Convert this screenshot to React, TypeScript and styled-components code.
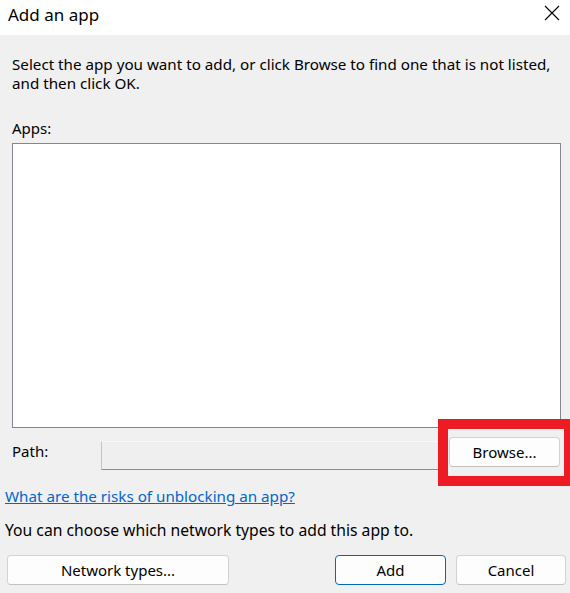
import React from "react";
import styled, { createGlobalStyle } from "styled-components";

const GlobalStyle = createGlobalStyle`
  html, body {
    margin: 0;
    padding: 0;
    background: #f0f0f0;
  }
  body {
    font-family: "Noto Sans", "Liberation Sans", sans-serif;
    color: #000;
  }
`;

const Dialog = styled.div`
  width: 570px;
  height: 593px;
  display: flex;
  flex-direction: column;
  background: #f0f0f0;
  overflow: hidden;
`;

const TitleBar = styled.div`
  height: 35px;
  flex: none;
  background: #fff;
  display: flex;
  align-items: center;
  justify-content: space-between;
  padding: 0 10px 0 8px;
`;

const Title = styled.div`
  font-size: 17px;
  line-height: 24px;
  margin-top: -6px;
`;

const CloseButton = styled.button`
  border: 0;
  background: transparent;
  padding: 0;
  width: 16px;
  height: 16px;
  margin-top: -10px;
  display: flex;
  align-items: center;
  justify-content: center;
  cursor: pointer;
`;

const Content = styled.div`
  flex: 1;
  display: flex;
  flex-direction: column;
`;

const Section = styled.div`
  padding: 0 9px 0 12px;
  display: flex;
  flex-direction: column;
`;

const Prompt = styled.p`
  margin: 20px 0 0;
  font-size: 15.2px;
  line-height: 19px;
  white-space: nowrap;
`;

const FieldLabel = styled.div`
  font-size: 15px;
  line-height: 19px;
  margin-top: 26px;
`;

const AppList = styled.div`
  margin-top: 5px;
  height: 283px;
  background: #fff;
  border: 1px solid #828790;
`;

const PathRow = styled.div`
  display: flex;
  align-items: center;
  margin-top: 11px;
  height: 31px;
`;

const PathLabel = styled.div`
  width: 89px;
  flex: none;
  font-size: 15px;
  line-height: 19px;
  margin-top: -6px;
`;

const PathInput = styled.div`
  width: 338px;
  height: 27px;
  flex: none;
  align-self: flex-end;
  background: #efefef;
  border: 1px solid #d6d6d6;
  border-top-color: #f8f8f8;
  border-bottom-color: #8c8c8c;
  border-left-color: #c4c4c4;
`;

const Marked = styled.div`
  position: relative;
  margin-left: 8px;
  align-self: flex-start;
  margin-top: -2px;

  &::after {
    content: "";
    position: absolute;
    top: -18px;
    left: -11px;
    right: -14px;
    bottom: -19px;
    border: 10px solid #ed1c24;
    pointer-events: none;
  }
`;

const Button = styled.button<{ $primary?: boolean; $width: number }>`
  width: ${(p) => p.$width}px;
  height: 30px;
  box-sizing: border-box;
  padding: 0;
  font-family: inherit;
  font-size: 15px;
  color: #000;
  background: #fdfdfd;
  border: 1px solid ${(p) => (p.$primary ? "#0067c0" : "#d3d3d3")};
  border-bottom-color: ${(p) => (p.$primary ? "#0067c0" : "#c2c2c2")};
  border-radius: 4px;
  cursor: pointer;
`;

const Footer = styled.div`
  padding: 0 4px 0 5px;
  display: flex;
  flex-direction: column;
`;

const HelpLink = styled.a`
  margin-top: 17px;
  font-size: 15.2px;
  line-height: 19px;
  color: #0066cc;
  text-decoration: underline;
  align-self: flex-start;
  cursor: pointer;
`;

const Note = styled.div`
  margin-top: 15px;
  font-size: 15.7px;
  line-height: 19px;
`;

const ButtonBar = styled.div`
  margin-top: 15px;
  display: flex;
  align-items: center;
  padding-left: 2px;
`;

const Spacer = styled.div`
  flex: 1;
`;

const ButtonGap = styled.div`
  width: 10px;
`;

const CloseIcon = () => (
  <svg width="16" height="16" viewBox="0 0 16 16">
    <path d="M1 1 L15 15 M15 1 L1 15" stroke="#000" strokeWidth="1.1" fill="none" />
  </svg>
);

export default function App() {
  return (
    <>
      <GlobalStyle />
      <Dialog>
        <TitleBar>
          <Title>Add an app</Title>
          <CloseButton aria-label="Close">
            <CloseIcon />
          </CloseButton>
        </TitleBar>
        <Content>
          <Section>
            <Prompt>
              Select the app you want to add, or click Browse to find one that is not listed,
              <br />
              and then click OK.
            </Prompt>
            <FieldLabel>Apps:</FieldLabel>
            <AppList />
            <PathRow>
              <PathLabel>Path:</PathLabel>
              <PathInput />
              <Marked>
                <Button $width={111}>Browse...</Button>
              </Marked>
            </PathRow>
          </Section>
          <Footer>
            <HelpLink>What are the risks of unblocking an app?</HelpLink>
            <Note>You can choose which network types to add this app to.</Note>
            <ButtonBar>
              <Button $width={222}>Network types...</Button>
              <Spacer />
              <Button $primary $width={111}>Add</Button>
              <ButtonGap />
              <Button $width={110}>Cancel</Button>
            </ButtonBar>
          </Footer>
        </Content>
      </Dialog>
    </>
  );
}
